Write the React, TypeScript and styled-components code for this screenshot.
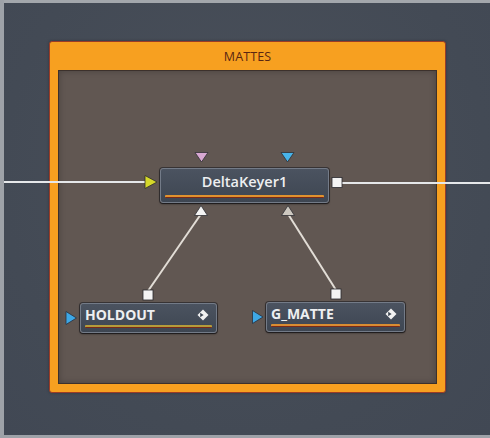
import styled, { createGlobalStyle } from "styled-components";

const GlobalStyle = createGlobalStyle`
  html, body {
    margin: 0;
    padding: 0;
    background: #454c57;
  }
  * {
    box-sizing: border-box;
  }
`;

const Canvas = styled.div`
  position: relative;
  width: 490px;
  height: 438px;
  overflow: hidden;
  padding: 41px 0 0 49px;
  background: radial-gradient(ellipse at 50% 40%, #4a505a 0%, #434a55 70%, #414854 100%);
  box-shadow: inset 4px 0 0 #9ea2a8, inset 0 3px 0 #a3a7ac, inset 0 -3px 0 #9ea2a8;
  font-family: "Open Sans", "Noto Sans", sans-serif;
`;

const Group = styled.div`
  width: 397px;
  height: 352px;
  display: flex;
  flex-direction: column;
  background: #f7a020;
  border: 1px solid #9a3c26;
  border-radius: 3px;
  padding: 0 8px 8px 8px;
  box-shadow: 0 0 3px rgba(20, 20, 30, 0.4);
`;

const GroupTitle = styled.div`
  height: 28px;
  display: flex;
  align-items: center;
  justify-content: center;
  font-size: 12.5px;
  color: #5a2612;
  letter-spacing: 0.1px;
`;

const GroupBody = styled.div`
  flex: 1;
  background: #615752;
  border: 1px solid #3c312c;
  box-shadow: inset 0 0 6px rgba(0, 0, 0, 0.25);
`;

const Wires = styled.svg`
  position: absolute;
  left: 0;
  top: 0;
  width: 490px;
  height: 438px;
  pointer-events: none;
`;

const Node = styled.div<{ $x: number; $y: number; $w: number; $h: number }>`
  position: absolute;
  left: ${(p) => p.$x}px;
  top: ${(p) => p.$y}px;
  width: ${(p) => p.$w}px;
  height: ${(p) => p.$h}px;
  display: flex;
  flex-direction: column;
  padding: 0 4px 4px 4px;
  background: linear-gradient(#4b5360, #3e4652);
  border: 1px solid #737b88;
  border-radius: 3px;
  box-shadow: 0 1px 2px rgba(0, 0, 0, 0.6), 0 0 0 1px rgba(30, 30, 36, 0.6);
`;

const NodeHead = styled.div<{ $center?: boolean }>`
  flex: 1;
  display: flex;
  align-items: center;
  justify-content: ${(p) => (p.$center ? "center" : "space-between")};
  padding: ${(p) => (p.$center ? "0" : "0 3px 0 0")};
`;

const NodeLabel = styled.span<{ $bold?: boolean }>`
  color: #eeeff1;
  font-size: ${(p) => (p.$bold ? "14px" : "14.5px")};
  font-weight: ${(p) => (p.$bold ? 700 : 600)};
  line-height: 1;
  white-space: nowrap;
`;

const NodeBar = styled.div<{ $color: string }>`
  height: 3px;
  background: ${(p) => p.$color};
  border-bottom: 1px solid #7a2a18;
  border-radius: 1px;
`;

const Diamond = () => (
  <svg width="12" height="12" viewBox="0 0 12 12">
    <polygon points="6,0.5 11.5,6 6,11.5 0.5,6" fill="#f2f2f2" />
    <polygon points="3.2,3.8 6.6,6 3.2,8.2" fill="#3e4652" />
  </svg>
);

export default function App() {
  return (
    <>
      <GlobalStyle />
      <Canvas>
        <Group>
          <GroupTitle>MATTES</GroupTitle>
          <GroupBody />
        </Group>

        <Wires viewBox="0 0 490 438">
          <line x1="4" y1="182" x2="146" y2="182" stroke="#e6e8ea" strokeWidth="2" />
          <line x1="342" y1="183" x2="490" y2="183" stroke="#e6e8ea" strokeWidth="2" />
          <line x1="148" y1="291" x2="201" y2="214" stroke="#e2ddd6" strokeWidth="2" />
          <line x1="336" y1="290" x2="288" y2="214" stroke="#e2ddd6" strokeWidth="2" />

          <polygon points="145,175.5 157,182 145,188.5" fill="#d6d82a" stroke="#2e2e28" strokeWidth="0.8" />
          <polygon points="195,152.5 208,152.5 201.5,162" fill="#d8a8d2" stroke="#2e2e34" strokeWidth="0.8" />
          <polygon points="281,152.5 294,152.5 287.5,162" fill="#48b4ea" stroke="#2e2e34" strokeWidth="0.8" />
          <polygon points="194.5,215.5 207.5,215.5 201,205.5" fill="#f4f4f4" stroke="#2e2e34" strokeWidth="0.8" />
          <polygon points="281.5,215.5 294.5,215.5 288,205.5" fill="#cdc8c0" stroke="#2e2e34" strokeWidth="0.8" />

          <rect x="332" y="177.5" width="10" height="10" fill="#f4f4f4" stroke="#2a2a2e" strokeWidth="0.8" />
          <rect x="143" y="290" width="10" height="10" fill="#f4f4f4" stroke="#2a2a2e" strokeWidth="0.8" />
          <rect x="331" y="289" width="10" height="10" fill="#f4f4f4" stroke="#2a2a2e" strokeWidth="0.8" />

          <polygon points="66,311.5 76.5,318 66,324.5" fill="#3ea8e6" stroke="#263040" strokeWidth="0.8" />
          <polygon points="252.5,310.5 263,317 252.5,323.5" fill="#3ea8e6" stroke="#263040" strokeWidth="0.8" />
        </Wires>

        <Node $x={160} $y={168} $w={169} $h={35}>
          <NodeHead $center>
            <NodeLabel>DeltaKeyer1</NodeLabel>
          </NodeHead>
          <NodeBar $color="#e0922e" />
        </Node>

        <Node $x={80} $y={303} $w={137} $h={30}>
          <NodeHead>
            <NodeLabel $bold>HOLDOUT</NodeLabel>
            <Diamond />
          </NodeHead>
          <NodeBar $color="#b59c3a" />
        </Node>

        <Node $x={266} $y={302} $w={139} $h={30}>
          <NodeHead>
            <NodeLabel $bold>G_MATTE</NodeLabel>
            <Diamond />
          </NodeHead>
          <NodeBar $color="#d98c32" />
        </Node>
      </Canvas>
    </>
  );
}
